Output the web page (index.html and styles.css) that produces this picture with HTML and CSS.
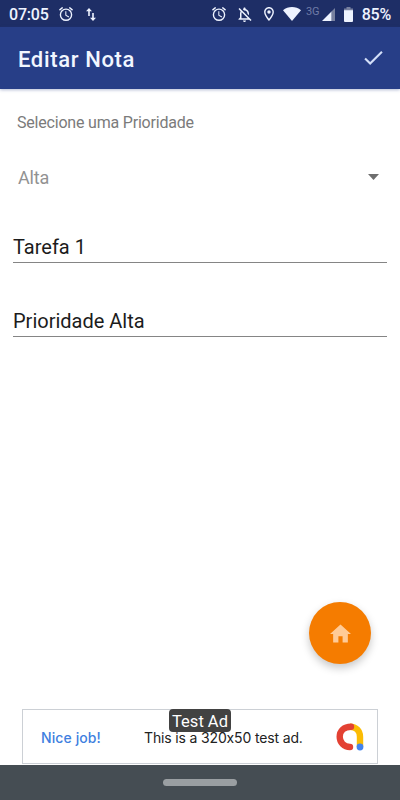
FILE: index.html
```html
<!DOCTYPE html>
<html lang="pt-BR">
<head>
    <meta charset="UTF-8">
    <meta name="viewport" content="width=device-width, initial-scale=1.0">
    <title>Editar Nota</title>
    <link rel="stylesheet" href="styles.css">
</head>
<body>
    <div class="screen">
        <div class="status-bar">
            <span class="clock">07:05</span>
            <svg class="icon-alarm" viewBox="2 2 20 20"><path d="M22 5.72l-4.6-3.86-1.29 1.53 4.6 3.86L22 5.72zM7.88 3.39L6.6 1.86 2 5.71l1.29 1.53 4.59-3.85zM12.5 8H11v6l4.75 2.85.75-1.23-4-2.37V8zM12 4a9 9 0 1 0 0 18 9 9 0 0 0 0-18zm0 16a7 7 0 1 1 0-14 7 7 0 0 1 0 14z"/></svg>
            <svg class="icon-data" viewBox="0 0 10 13"><path d="M3 0l3 3.2H3.8V8H2.2V3.2H0zM7 13L4 9.8h2.2V5h1.6v4.8H10z"/></svg>
            <span class="spacer"></span>
            <svg class="icon-alarm" viewBox="2 2 20 20"><path d="M22 5.72l-4.6-3.86-1.29 1.53 4.6 3.86L22 5.72zM7.88 3.39L6.6 1.86 2 5.71l1.29 1.53 4.59-3.85zM12.5 8H11v6l4.75 2.85.75-1.23-4-2.37V8zM12 4a9 9 0 1 0 0 18 9 9 0 0 0 0-18zm0 16a7 7 0 1 1 0-14 7 7 0 0 1 0 14z"/></svg>
            <svg class="icon-bell" viewBox="2.5 2 19 20"><path d="M12 22c1.1 0 2-.9 2-2h-4c0 1.1.9 2 2 2zm0-15.5c2.49 0 4 2.02 4 4.5v.1l2 2V11c0-3.07-1.63-5.64-4.5-6.32V4c0-.83-.67-1.5-1.5-1.5s-1.5.67-1.5 1.5v.68c-.24.06-.47.15-.69.23l1.64 1.64c.18-.02.36-.05.55-.05zM5.41 3.35L4 4.76l2.81 2.81C6.29 8.57 6 9.74 6 11v5l-2 2v1h14.24l1.74 1.74 1.41-1.41L5.41 3.35zM16 17H8v-6c0-.68.12-1.32.34-1.9L16 16.76V17z"/></svg>
            <svg class="icon-pin" viewBox="5 2 14 20"><path d="M12 2C8.13 2 5 5.13 5 9c0 5.25 7 13 7 13s7-7.75 7-13c0-3.87-3.13-7-7-7zM7 9c0-2.76 2.24-5 5-5s5 2.24 5 5c0 2.88-2.88 7.19-5 9.88C9.92 16.21 7 11.85 7 9z"/><circle cx="12" cy="9" r="2.5"/></svg>
            <svg class="icon-wifi" viewBox="0 0 18 14"><path d="M0 3.2C5-1 13-1 18 3.2L9 14z"/></svg>
            <span class="network">3G</span>
            <svg class="icon-signal" viewBox="0 0 13 13"><path class="faded" d="M9.5 3.5L13 0v13H9.5z"/><path d="M0 13L9.5 3.5V13z"/></svg>
            <svg class="icon-battery" viewBox="0 0 9 15"><path class="faded" d="M2.5 0h4v1.5H9V4H0V1.5h2.5z"/><path d="M0 3.3h9V14a1 1 0 0 1-1 1H1a1 1 0 0 1-1-1z"/></svg>
            <span class="battery-level">85%</span>
        </div>

        <header class="toolbar">
            <h1>Editar Nota</h1>
            <svg class="icon-check" viewBox="3.41 5.59 17.59 13.41"><path d="M9 16.17L4.83 12l-1.42 1.41L9 19 21 7l-1.41-1.41z"/></svg>
        </header>

        <main class="form">
            <div class="label">Selecione uma Prioridade</div>
            <div class="spinner">
                <span>Alta</span>
                <svg class="icon-caret" viewBox="0 0 11 6"><path d="M0 0h11L5.5 6z"/></svg>
            </div>
            <div class="field">Tarefa 1</div>
            <div class="field">Prioridade Alta</div>
        </main>

        <div class="fab">
            <svg class="icon-home" viewBox="2 3 20 17"><path d="M10 20v-6h4v6h5v-8h3L12 3 2 12h3v8z"/></svg>
        </div>

        <div class="ad">
            <span class="ad-title">Nice job!</span>
            <span class="ad-text">This is a 320x50 test ad.</span>
            <svg class="ad-logo" viewBox="0 0 28 28">
                <path class="yellow" d="M14 3.7c6 0 10 4.3 10 10V24"/>
                <path class="red" d="M14 24C8 24 3.7 19.5 3.7 13.8S8 3.7 15 3.7"/>
                <circle class="blue" cx="24" cy="24" r="3.4"/>
            </svg>
            <span class="ad-badge">Test Ad</span>
        </div>

        <div class="nav-bar"><div class="pill"></div></div>
    </div>
</body>
</html>
```
FILE: styles.css
```css
body {
    margin: 0;
    font-family: Roboto, sans-serif;
    background-color: #fff;
}

.screen {
    position: relative;
    display: flex;
    flex-direction: column;
    width: 400px;
    height: 800px;
    overflow: hidden;
}

svg {
    display: block;
    flex: none;
}

/* status bar */
.status-bar {
    display: flex;
    align-items: center;
    box-sizing: border-box;
    height: 27px;
    padding: 1px 9px 0;
    background-color: #1e2e66;
    color: #eef3ff;
    fill: #eef3ff;
    font-size: 16px;
    font-weight: 500;
    letter-spacing: -0.2px;
}

.clock {
    width: 50px;
}

.spacer {
    flex: 1;
}

.icon-alarm {
    width: 14px;
    height: 14px;
}

.icon-data {
    width: 10px;
    height: 13px;
    margin-left: 13px;
}

.icon-bell {
    width: 15px;
    height: 15px;
    margin-left: 11px;
}

.icon-pin {
    width: 10px;
    height: 14px;
    margin-left: 12px;
}

.icon-wifi {
    width: 18px;
    height: 14px;
    margin-left: 9px;
}

.network {
    margin: 0 2px 4px 5px;
    font-size: 11px;
    font-weight: 400;
    line-height: 12px;
    letter-spacing: 0;
    color: #6f7ba6;
}

.icon-signal {
    width: 13px;
    height: 13px;
}

.icon-battery {
    width: 9px;
    height: 15px;
    margin: 0 9px;
}

.faded {
    fill: #77809f;
}

/* toolbar */
.toolbar {
    display: flex;
    align-items: center;
    justify-content: space-between;
    box-sizing: border-box;
    height: 62px;
    padding: 2px 17px 0 18px;
    background-color: #273e87;
    box-shadow: 0 1px 3px rgba(39, 62, 135, 0.35);
}

.toolbar h1 {
    margin: 0;
    font-size: 22px;
    font-weight: 500;
    letter-spacing: 0.65px;
    color: #f2f6ff;
}

.icon-check {
    width: 19px;
    height: 14px;
    margin-bottom: 2px;
    fill: #d3dff8;
}

/* form */
.form {
    flex: 1;
    padding: 0 13px;
}

.label {
    margin: 24px 0 0 4px;
    font-size: 16px;
    line-height: 20px;
    letter-spacing: -0.2px;
    color: #7b7b7b;
}

.spinner {
    display: flex;
    align-items: center;
    justify-content: space-between;
    height: 24px;
    margin: 32px 8px 0 5px;
    font-size: 18px;
    letter-spacing: -0.2px;
    color: #929292;
}

.icon-caret {
    width: 11px;
    height: 6px;
    fill: #6e6e6e;
}

.field {
    height: 26px;
    margin-top: 47px;
    border-bottom: 1px solid #858585;
    font-size: 20px;
    line-height: 22px;
    color: #1c1c1c;
}

/* floating button */
.fab {
    position: absolute;
    left: 309px;
    top: 602px;
    display: flex;
    align-items: center;
    justify-content: center;
    width: 62px;
    height: 62px;
    border-radius: 50%;
    background-color: #f57c00;
    box-shadow: 0 4px 9px rgba(0, 0, 0, 0.22);
}

.icon-home {
    width: 21px;
    height: 19px;
    fill: #ffcb97;
}

/* banner */
.ad {
    position: relative;
    display: flex;
    align-items: center;
    box-sizing: border-box;
    width: 356px;
    height: 55px;
    margin: 0 auto 1px;
    padding: 2px 13px 0 18px;
    border: 1px solid #ccd0d5;
    font-family: Inter, sans-serif;
    font-size: 14px;
    line-height: 16px;
}

.ad-title {
    width: 103px;
    font-weight: 500;
    letter-spacing: 0.1px;
    color: #3f7fe0;
}

.ad-text {
    flex: 1;
    letter-spacing: -0.15px;
    color: #222;
    white-space: nowrap;
}

.ad-logo {
    width: 28px;
    height: 28px;
    margin-bottom: 1px;
    fill: none;
    stroke-width: 6.4;
    stroke-linecap: round;
}

.yellow {
    stroke: #fbbc04;
    stroke-linecap: butt;
}

.red {
    stroke: #e34133;
}

.blue {
    fill: #4484ee;
}

.ad-badge {
    position: absolute;
    left: 146px;
    top: -1px;
    box-sizing: border-box;
    width: 62px;
    height: 23px;
    padding-top: 4px;
    border-radius: 4px;
    background-color: #424242;
    font-family: Roboto, sans-serif;
    font-size: 16.5px;
    line-height: 18px;
    text-align: center;
    color: #fff;
}

/* gesture bar */
.nav-bar {
    display: flex;
    justify-content: center;
    height: 35px;
    background-color: #454d53;
}

.pill {
    width: 74px;
    height: 7px;
    margin-top: 14px;
    border-radius: 4px;
    background-color: #9a9fa2;
}
```
